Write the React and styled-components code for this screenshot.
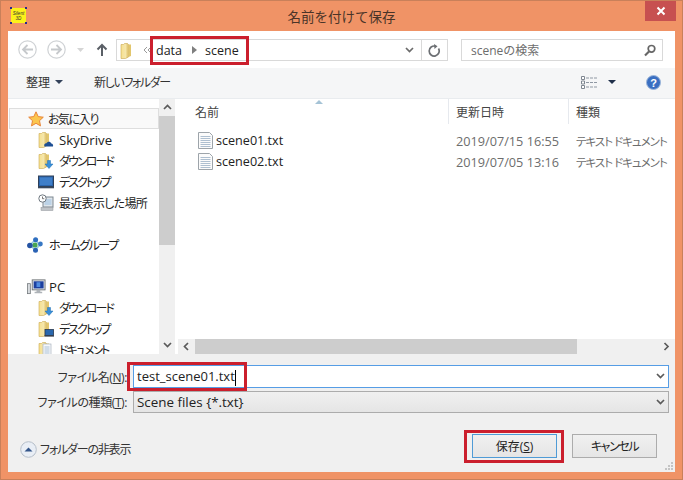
import React from "react";
import styled, { createGlobalStyle } from "styled-components";

const Global = createGlobalStyle`
  * { box-sizing: border-box; }
  html, body { margin: 0; padding: 0; background: #f09366; }
  body { font-family: "Open Sans", "Noto Sans CJK JP", sans-serif; font-size: 12px; color: #1e1e1e; font-feature-settings: "palt"; }
`;

const Window = styled.div`
  width: 683px; height: 480px; background: #f09366; border: 1px solid #c9805a;
  display: flex; flex-direction: column; overflow: hidden;
`;
const TitleBar = styled.div`
  height: 30px; flex: none; display: flex; align-items: flex-start; justify-content: space-between;
  padding: 6px 0 0 9px; position: relative;
`;
const Title = styled.div`
  position: absolute; left: 0; right: 0; top: 6px; text-align: center; font-size: 13.5px; line-height: 20px; color: #4a3428; font-feature-settings: normal;
`;
const Close = styled.div`
  position: absolute; right: 6px; top: 0; width: 31px; height: 20px; background: #c75050;
  display: flex; align-items: center; justify-content: center;
`;
const Client = styled.div`
  flex: none; width: 667px; height: 441px; margin-left: 7px; background: #fff; display: flex; flex-direction: column;
`;
const Nav = styled.div`
  height: 37px; flex: none; display: flex; align-items: center; padding: 0 12px 0 10px; background: #fff;
`;
const NavBtns = styled.div` width: 98px; flex: none; display: flex; align-items: center; `;
const AddressBox = styled.div`
  width: 332px; height: 22px; flex: none; border: 1px solid #d9d9d9; display: flex; align-items: center; padding-left: 3px; position: relative; margin-top: 1px;
`;
const Crumbs = styled.div`
  position: relative; display: flex; align-items: center; margin-left: 4px; font-size: 12.5px; color: #222; flex: 1;
`;
const CrumbText = styled.span` margin-left: ${p => p.$ml || 0}px; `;
const AddrTail = styled.div`
  width: 26px; height: 20px; flex: none; border-left: 1px solid #d9d9d9; display: flex; align-items: center; justify-content: center;
`;
const Chevron = styled.div` width: 24px; flex: none; display: flex; align-items: center; justify-content: center; `;
const Search = styled.div`
  width: 202px; height: 22px; flex: none; margin-left: 13px; margin-top: 1px; border: 1px solid #d9d9d9; display: flex; align-items: center; justify-content: space-between;
  padding: 0 6px 0 9px; color: #6d6d6d; font-size: 12px; font-feature-settings: normal;
`;
const Toolbar = styled.div`
  height: 31px; flex: none; background: #f5f6f7; border-bottom: 1px solid #e9ecef; display: flex; align-items: center; padding: 0 14px 2px 18px; color: #333; font-size: 12px;
`;
const ToolItem = styled.div`
  display: flex; align-items: center; gap: ${p => p.$gap || 0}px; margin-left: ${p => p.$ml || 0}px; letter-spacing: ${p => p.$ls || 0}px;
`;
const Spacer = styled.div` flex: 1; `;
const Body = styled.div` height: 255px; flex: none; display: flex; `;
const Sidebar = styled.div` width: 151px; flex: none; overflow: hidden; padding-top: 9px; display: flex; flex-direction: column; `;
const Group = styled.div` margin-bottom: 21px; display: flex; flex-direction: column; flex: none; `;
const TreeRow = styled.div`
  height: 21px; flex: none; display: flex; align-items: center; white-space: nowrap; color: #222;
  font-size: ${p => (p.$latin ? 13.2 : 12)}px; letter-spacing: ${p => p.$ls || 0}px;
  padding-left: ${p => (p.$sub ? 30 : 19)}px; gap: ${p => (p.$sub ? 5 : 6)}px;
  ${p => p.$active && "background:#f9f9f9; border:1px solid #dedede; margin-left:1px; padding-left:18px; gap:4px;"}
`;
const VScroll = styled.div` width: 16px; flex: none; background: #f0f0f0; display: flex; flex-direction: column; `;
const VArrow = styled.div` height: 17px; display: flex; align-items: center; justify-content: center; background: #f0f0f0; flex: none; `;
const VThumb = styled.div` height: 129px; flex: none; background: #cdcdcd; `;
const VTrack = styled.div` flex: 1; display: flex; flex-direction: column; justify-content: flex-start; `;
const Main = styled.div` flex: 1; display: flex; flex-direction: column; min-width: 0; position: relative; `;
const Cols = styled.div` display: grid; grid-template-columns: 274px 120px 1fr; `;
const Header = styled(Cols)` height: 25px; flex: none; color: #4c607a; font-size: 12px; align-items: stretch; `;
const HeaderCell = styled.div`
  display: flex; align-items: center; padding-left: ${p => (p.$first ? 20 : 7)}px; color: #444; border-right: ${p => (p.$last ? "none" : "1px solid #e6e9ee")};
  padding-top: 1px; font-feature-settings: normal;
`;
const SortMark = styled.div`
  position: absolute; left: 140px; top: 1px; width: 0; height: 0; border-left: 4px solid transparent; border-right: 4px solid transparent; border-bottom: 4px solid #a5c3d6;
`;
const Files = styled.div` flex: 1; padding-top: 6px; display: flex; flex-direction: column; `;
const FileRow = styled(Cols)` height: 21px; flex: none; align-items: center; color: #222; font-size: 12px; `;
const NameCell = styled.div` display: flex; align-items: center; padding-left: 23px; gap: 3px; font-size: 12.6px; color: #222; `;
const DataCell = styled.div` color: #6d6d6d; padding-left: 7px; white-space: nowrap; font-size: 12.7px; `;
const KindCell = styled(DataCell)` font-size: 11.5px; letter-spacing: -1px; `;
const HScroll = styled.div` height: 15px; flex: none; margin-left: 3px; background: #f0f0f0; display: flex; align-items: center; `;
const HArrow = styled.div` width: 17px; flex: none; display: flex; align-items: center; justify-content: center; `;
const HThumb = styled.div` width: 382px; height: 100%; flex: none; background: #cdcdcd; `;
const HTrack = styled.div` flex: 1; `;
const Bottom = styled.div` flex: 1; background: #f0f0f0; display: flex; flex-direction: column; padding: 11px 6px 0 0; position: relative; `;
const FormRow = styled.div` display: grid; grid-template-columns: 125px 1fr; align-items: center; margin-bottom: ${p => p.$mb || 0}px; height: ${p => p.$h}px; `;
const Label = styled.label` text-align: right; color: #333; font-size: 12px; white-space: nowrap; padding-right: 6px; letter-spacing: -0.4px; `;
const FieldWrap = styled.div` position: relative; height: 100%; `;
const Field = styled.div`
  height: 100%; display: flex; align-items: center; justify-content: space-between; padding: 0 3px 0 3px; font-size: ${p => (p.$focus ? 13 : 13.4)}px; color: #222;
  border: 1px solid ${p => (p.$focus ? "#569de5" : "#acacac")};
  background: ${p => (p.$focus ? "#fff" : "linear-gradient(#f0f0f0,#e5e5e5)")};
`;
const Caret = styled.span` display: inline-block; width: 1px; height: 16px; background: #000; vertical-align: middle; `;
const Actions = styled.div` display: flex; align-items: flex-start; justify-content: space-between; margin-top: 21px; padding-left: 12px; padding-right: 12px; `;
const Toggle = styled.div` display: flex; align-items: center; gap: 3px; font-size: 12px; color: #333; margin-top: 5px; height: 20px; letter-spacing: -1.2px; `;
const BtnGroup = styled.div` display: flex; gap: 15px; `;
const BtnWrap = styled.div` position: relative; `;
const Button = styled.div`
  width: 85px; height: 24px; display: flex; align-items: center; justify-content: center; font-size: 12px; color: #222;
  letter-spacing: ${p => p.$ls || 0}px;
  border: 1px solid ${p => (p.$primary ? "#4f9bd6" : "#acacac")}; background: linear-gradient(#f0f0f0,#e5e5e5);
`;
const Highlight = styled.div`
  position: absolute; left: ${p => p.$l}px; top: ${p => p.$t}px; width: ${p => p.$w}px; height: ${p => p.$h}px;
  border: 3px solid #cb1f2d; pointer-events: none;
`;
const Grip = styled.svg` position: absolute; right: 2px; bottom: 2px; `;

const Folder = ({ children, doc }) => (
  <svg width="16" height="17" viewBox="0 0 16 17" style={{ flex: "none" }}>
    <defs>
      <linearGradient id="fg" x1="0" x2="1" y1="0" y2="0">
        <stop offset="0" stopColor="#f7e08e" /><stop offset="0.6" stopColor="#f5e6ab" /><stop offset="1" stopColor="#dcbc5f" />
      </linearGradient>
    </defs>
    <path d="M1 2.5h2.5l1 -1h3l1 1V15l-3 1.5H1z" fill="url(#fg)" stroke="#c9a850" strokeWidth=".6" />
    <path d="M8.5 2.5h2.5v11.5l-2.5 1z" fill="#e2c66d" />
    {doc && <g><rect x="5" y="3" width="8" height="12" fill="#f5f7fa" stroke="#a9b2bd" strokeWidth=".7" /><path d="M6.5 6h5M6.5 8h5M6.5 10h5M6.5 12h5" stroke="#8eaac6" strokeWidth=".7" /></g>}
    {children}
  </svg>
);
const DownBadge = () => <path d="M9.5 8.5h3v3.5h2.5l-4 4.5-4-4.5h2.5z" fill="#3a8fd8" stroke="#1f6cb2" strokeWidth=".5" />;
const CloudBadge = () => <path d="M6.5 15.5c-1-2 .5-3.5 2-3.2.6-2 4-2.2 4.8.3 1.4 0 2.2 1.5 1.7 2.9z" fill="#1e4f94" />;
const DeskBadge = () => <g><rect x="7" y="9.5" width="8.5" height="6" fill="#2a67ad" stroke="#27374f" strokeWidth=".8" /><rect x="6.5" y="15.2" width="9.5" height="1.4" fill="#333c4a" /></g>;

const Star = () => (
  <svg width="16" height="16" viewBox="0 0 16 16" style={{ flex: "none" }}>
    <path d="M8 .8l2.2 4.8 5.1.6-3.8 3.5 1 5.2L8 12.3l-4.5 2.6 1-5.2L.7 6.2l5.1-.6z" fill="#fbc64e" stroke="#e8853a" strokeWidth="1" />
  </svg>
);
const Desktop = () => (
  <svg width="16" height="14" viewBox="0 0 16 14" style={{ flex: "none" }}>
    <rect x=".5" y="1" width="15" height="10.5" fill="#2c66ad" stroke="#2f3f57" />
    <rect x="2" y="2.5" width="12" height="7.5" fill="#3f7fc9" />
    <rect x="0" y="11.5" width="16" height="1.8" fill="#39485c" />
  </svg>
);
const Recent = () => (
  <svg width="16" height="17" viewBox="0 0 16 17" style={{ flex: "none" }}>
    <rect x="5" y="3" width="10" height="10" fill="#dfe5ea" stroke="#7d8791" />
    <rect x="6.5" y="5" width="7" height="6" fill="#bcd2e6" />
    <rect x="3" y="13.5" width="12" height="3" fill="#c0c4c8" stroke="#8f9499" strokeWidth=".5" />
    <circle cx="4.5" cy="4.5" r="3.7" fill="#fff" stroke="#6f7880" />
    <path d="M4.5 2.5v2.2h1.8" stroke="#555" fill="none" strokeWidth=".8" />
  </svg>
);
const HomeGroup = () => (
  <svg width="16" height="16" viewBox="0 0 16 16" style={{ flex: "none" }}>
    <path d="M8 3L3 8l5 5 5-5z" fill="none" stroke="#8fc7e4" strokeWidth="1.5" />
    <circle cx="8" cy="8" r="2.6" fill="#49a552" />
    <circle cx="8.6" cy="2.8" r="2.5" fill="#2f6fc0" />
    <circle cx="2.9" cy="8.5" r="2.8" fill="#2453a3" />
    <circle cx="13.4" cy="7" r="2.4" fill="#3778c4" />
    <circle cx="8.5" cy="13.2" r="2.5" fill="#2a62b4" />
  </svg>
);
const PC = () => (
  <svg width="19" height="16" viewBox="0 0 20 16" style={{ flex: "none", marginRight: -3 }}>
    <rect x="0.5" y="4.5" width="3" height="10.5" fill="#d8dcdf" stroke="#6f7478" strokeWidth=".8" />
    <rect x="5.5" y="0.5" width="13.5" height="10.5" fill="#e4e7ea" stroke="#6f7478" />
    <rect x="7" y="2" width="10.5" height="7.5" fill="#1c3f9e" />
    <path d="M10 3h4v5h-4z" fill="#4f8be0" />
    <path d="M10 11h4v2h2v1.5H8V13h2z" fill="#aeb3b8" />
  </svg>
);
const TxtIcon = () => (
  <svg width="15" height="17" viewBox="0 0 15 17" style={{ flex: "none" }}>
    <path d="M.5.5h11l3 3v13H.5z" fill="#fbfbfb" stroke="#9da4aa" />
    <path d="M2.5 4.5h10M2.5 6.5h10M2.5 8.5h10M2.5 10.5h10M2.5 12.5h10M2.5 14.5h10" stroke="#aebfd0" />
  </svg>
);
const NavCircle = ({ dir }) => (
  <svg width="19" height="19" viewBox="0 0 19 19" style={{ flex: "none" }}>
    <circle cx="9.5" cy="9.5" r="8.7" fill="#fff" stroke="#cfd2d5" strokeWidth="1.2" />
    <path d={dir === "l" ? "M15 9.5H5M9.5 5L5 9.5 9.5 14" : "M4 9.5h10M9.5 5L14 9.5 9.5 14"} stroke="#c6c9cc" strokeWidth="1.8" fill="none" />
  </svg>
);
const Tri = ({ color = "#3f4a5a", w = 8, h = 4 }) => (
  <svg width={w} height={h} viewBox={`0 0 ${w} ${h}`} style={{ flex: "none" }}><path d={`M0 0h${w}L${w / 2} ${h}z`} fill={color} /></svg>
);
const Chev = ({ d, color = "#5a5a5a" }) => {
  const paths = {
    down: "M1 2l3.5 3.5L8 2",
    up: "M1 6l3.5-3.5L8 6",
    left: "M6 1L2.5 4.5 6 8",
    right: "M2.5 1L6 4.5 2.5 8",
  };
  return <svg width="9" height="9" viewBox="0 0 9 9" style={{ flex: "none" }}><path d={paths[d]} stroke={color} strokeWidth="1.7" fill="none" /></svg>;
};

export default function App() {
  return (
    <>
      <Global />
      <Window>
        <TitleBar>
          <svg width="17" height="17" viewBox="0 0 17 17" style={{ flex: "none" }}>
            <rect x="1" y="1" width="15" height="15" fill="#fcf11a" />
            <path d="M0 0h2v2H0zM15 0h2v2h-2zM0 15h2v2H0zM15 15h2v2h-2z" fill="#2a2a8a" />
            <text x="8.5" y="7.5" fontSize="4.6" fontStyle="italic" textAnchor="middle" fill="#333" fontFamily="Liberation Sans">Silent</text>
            <text x="8.5" y="13" fontSize="4.6" fontStyle="italic" textAnchor="middle" fill="#333" fontFamily="Liberation Sans">3D</text>
          </svg>
          <Title>名前を付けて保存</Title>
          <Close>
            <svg width="10" height="10" viewBox="0 0 10 10"><path d="M1.5 1.5l7 7M8.5 1.5l-7 7" stroke="#fff" strokeWidth="2" /></svg>
          </Close>
        </TitleBar>
        <Client>
          <Nav>
            <NavBtns>
              <NavCircle dir="l" />
              <span style={{ width: 10 }} />
              <NavCircle dir="r" />
              <span style={{ width: 11 }} />
              <Tri color="#d5d5d5" w={7} h={4} />
              <span style={{ width: 12 }} />
              <svg width="12" height="13" viewBox="0 0 12 13" style={{ flex: "none" }}><path d="M6 13V2M1.5 6.5L6 2l4.5 4.5" stroke="#5a5f66" strokeWidth="2" fill="none" /></svg>
            </NavBtns>
            <AddressBox>
              <Folder />
              <svg width="9" height="8" viewBox="0 0 9 8" style={{ flex: "none", marginLeft: 7 }}><path d="M4 1L1 4l3 3M8 1L5 4l3 3" stroke="#9a9a9a" fill="none" /></svg>
              <Crumbs>
                <CrumbText>data</CrumbText>
                <svg width="5" height="8" viewBox="0 0 5 8" style={{ flex: "none", marginLeft: 10, marginRight: 8 }}><path d="M0 0l5 4-5 4z" fill="#7f7f7f" /></svg>
                <CrumbText>scene</CrumbText>
                <Highlight $l={-6} $t={-6} $w={99} $h={29} />
              </Crumbs>
              <Chevron><Chev d="down" color="#6b6b6b" /></Chevron>
              <AddrTail>
                <svg width="13" height="13" viewBox="0 0 13 13"><path d="M10.5 4.5a5 5 0 1 1-3-2.3" stroke="#6c6f73" strokeWidth="1.7" fill="none" /><path d="M6 0l3.5 2.3L6.5 5z" fill="#6c6f73" /></svg>
              </AddrTail>
            </AddressBox>
            <Search>
              <span>sceneの検索</span>
              <svg width="12" height="13" viewBox="0 0 12 13"><circle cx="7.5" cy="4.8" r="3.3" stroke="#666" strokeWidth="1.7" fill="none" /><path d="M5 7.5L1 11.5" stroke="#666" strokeWidth="2.2" /></svg>
            </Search>
          </Nav>
          <Toolbar>
            <ToolItem $gap={5}>整理<Tri color="#33425a" w={8} h={4} /></ToolItem>
            <ToolItem $ml={31} $ls={-1.4}>新しいフォルダー</ToolItem>
            <Spacer />
            <ToolItem>
              <svg width="16" height="13" viewBox="0 0 16 13" style={{ flex: "none" }}>
                <path d="M.5.5h3v3h-3zM.5 5h3v3h-3zM.5 9.5h3v3h-3z" fill="#fff" stroke="#7f8791" />
                <path d="M5 2h11M5 6.5h11M5 11h11" stroke="#8f98a3" strokeDasharray="3 1" />
              </svg>
            </ToolItem>
            <ToolItem $ml={11}><Tri color="#1f2f4a" w={8} h={4} /></ToolItem>
            <ToolItem $ml={30}>
              <svg width="15" height="15" viewBox="0 0 15 15" style={{ flex: "none" }}>
                <circle cx="7.5" cy="7.5" r="7" fill="#3a6fc2" stroke="#9db6d9" />
                <text x="7.5" y="11.5" fontSize="11" fontWeight="700" textAnchor="middle" fill="#fff" fontFamily="Liberation Sans">?</text>
              </svg>
            </ToolItem>
          </Toolbar>
          <Body>
            <Sidebar>
              <Group>
                <TreeRow $active $ls={-1.4}><Star />お気に入り</TreeRow>
                <TreeRow $sub $latin><Folder><CloudBadge /></Folder>SkyDrive</TreeRow>
                <TreeRow $sub $ls={-1.9}><Folder><DownBadge /></Folder>ダウンロード</TreeRow>
                <TreeRow $sub $ls={-2}><Desktop />デスクトップ</TreeRow>
                <TreeRow $sub $ls={-0.7}><Recent />最近表示した場所</TreeRow>
              </Group>
              <Group>
                <TreeRow $ls={-1.4}><HomeGroup />ホームグループ</TreeRow>
              </Group>
              <Group>
                <TreeRow $latin><PC />PC</TreeRow>
                <TreeRow $sub $ls={-1.9}><Folder><DownBadge /></Folder>ダウンロード</TreeRow>
                <TreeRow $sub $ls={-2}><Folder><DeskBadge /></Folder>デスクトップ</TreeRow>
                <TreeRow $sub $ls={-2}><Folder doc />ドキュメント</TreeRow>
              </Group>
            </Sidebar>
            <VScroll>
              <VArrow><Chev d="up" /></VArrow>
              <VThumb />
              <VTrack />
              <VArrow><Chev d="down" /></VArrow>
            </VScroll>
            <Main>
              <SortMark />
              <Header>
                <HeaderCell $first>名前</HeaderCell>
                <HeaderCell>更新日時</HeaderCell>
                <HeaderCell $last>種類</HeaderCell>
              </Header>
              <Files>
                <FileRow>
                  <NameCell><TxtIcon />scene01.txt</NameCell>
                  <DataCell>2019/07/15 16:55</DataCell>
                  <KindCell>テキスト ドキュメント</KindCell>
                </FileRow>
                <FileRow>
                  <NameCell><TxtIcon />scene02.txt</NameCell>
                  <DataCell>2019/07/05 13:16</DataCell>
                  <KindCell>テキスト ドキュメント</KindCell>
                </FileRow>
              </Files>
              <HScroll>
                <HArrow><Chev d="left" /></HArrow>
                <HThumb />
                <HTrack />
                <HArrow><Chev d="right" /></HArrow>
              </HScroll>
            </Main>
          </Body>
          <Bottom>
            <FormRow $h={23} $mb={3}>
              <Label>ファイル名(<u>N</u>):</Label>
              <FieldWrap>
                <Field $focus>
                  <span>test_scene01.txt<Caret /></span>
                  <Chev d="down" />
                </Field>
                <Highlight $l={-6} $t={-3} $w={120} $h={29} />
              </FieldWrap>
            </FormRow>
            <FormRow $h={22}>
              <Label>ファイルの種類(<u>T</u>):</Label>
              <FieldWrap>
                <Field>
                  <span>Scene files {"{*.txt}"}</span>
                  <Chev d="down" />
                </Field>
              </FieldWrap>
            </FormRow>
            <Actions>
              <Toggle>
                <svg width="17" height="17" viewBox="0 0 17 17" style={{ flex: "none" }}>
                  <circle cx="8.5" cy="8.5" r="7.8" fill="#e9eef5" stroke="#b5bec9" />
                  <path d="M4.5 10.5l4-4 4 4z" fill="#33558a" />
                </svg>
                フォルダーの非表示
              </Toggle>
              <BtnGroup>
                <BtnWrap>
                  <Button $primary>保存(<u>S</u>)</Button>
                  <Highlight $l={-8} $t={-4} $w={100} $h={33} />
                </BtnWrap>
                <BtnWrap><Button $ls={-1.4}>キャンセル</Button></BtnWrap>
              </BtnGroup>
            </Actions>
            <Grip width="9" height="9" viewBox="0 0 9 9">
              <path d="M7 1h2v2H7zM4 4h2v2H4zM7 4h2v2H7zM1 7h2v2H1zM4 7h2v2H4zM7 7h2v2H7z" fill="#c4c4c4" />
            </Grip>
          </Bottom>
        </Client>
      </Window>
    </>
  );
}
